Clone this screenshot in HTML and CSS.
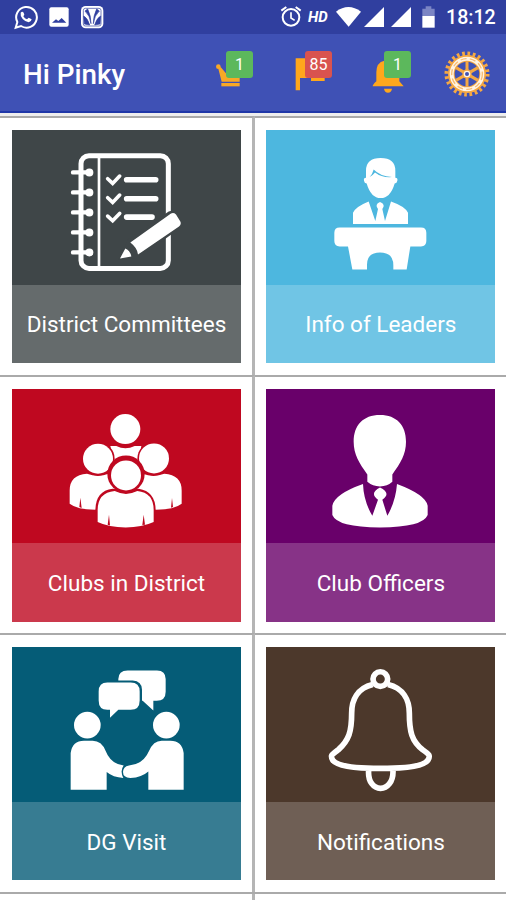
FILE: index.html
```html
<!DOCTYPE html>
<html lang="en">
<head>
<meta charset="utf-8">
<title>Hi Pinky</title>
<link rel="stylesheet" href="styles.css">
</head>
<body>
<header class="status">
  <div class="status-left">
    <svg width="24" height="25" viewBox="42 15 72 75"><path d="M47 83l5-17a31 31 0 1 1 11 12z" fill="none" stroke="#fff" stroke-width="6"/><path d="M62 38q5-6 9 0l2 6-3 5q4 7 11 9l5-5 9 5q-1 8-9 9-8 0-18-10-8-10-6-19z" fill="#fff"/></svg>
    <svg width="20" height="20" viewBox="149 23 60 60"><rect x="150" y="24" width="58" height="58" rx="6" fill="#fff"/><path d="M158 70l12-10 7 5 10-9 14 14z" fill="#303f9f"/></svg>
    <svg width="24" height="24" viewBox="243 15 72 72"><rect x="246" y="18" width="67" height="67" rx="14" fill="#fff"/><rect x="253" y="25" width="53" height="53" rx="6" fill="none" stroke="#303f9f" stroke-width="2"/><path d="M266 27q10 20 10 44-3-25-18-38zM293 27q-10 20-10 44 3-25 18-38zM254 48q12 6 18 27l-16-3zM305 48q-12 6-18 27l16-3z" fill="#303f9f" stroke="#303f9f" stroke-width="2"/></svg>
  </div>
  <div class="status-right">
    <svg class="alarm" width="22" height="22" viewBox="82 20 66 66"><circle cx="115" cy="54" r="25" fill="none" stroke="#fff" stroke-width="6"/><path d="M86 34l15-11M144 34l-15-11" stroke="#fff" stroke-width="6"/><path d="M115 39v17l11 7" fill="none" stroke="#fff" stroke-width="5"/></svg>
    <span class="hd">HD</span>
    <svg class="wifi" width="25" height="20" viewBox="249 22 75 60"><path d="M249 36q37-28 75 0l-37 45z" fill="#fff"/></svg>
    <svg class="signal" width="20" height="20" viewBox="333 22 60 60"><path d="M333 82l60-60v60z" fill="#fff"/></svg>
    <svg class="signal" width="20" height="20" viewBox="333 22 60 60"><path d="M333 82l60-60v60z" fill="#fff"/></svg>
    <svg class="battery" width="13" height="22" viewBox="507 20 39 66"><path d="M508 28h10v-7h17v7h10v22h-37z" fill="#7b85c4"/><path d="M508 50h37v35h-37z" fill="#fff"/></svg>
    <span class="clock">18:12</span>
  </div>
</header>
<div class="appbar">
  <h1>Hi Pinky</h1>
  <nav class="actions">
    <div class="action crown">
      <svg width="37" height="42" viewBox="51 33 111 126"><path d="M65 81L82 101l13-18 11 25 16-12v29H68L58 86z" fill="#f9a825"/><circle cx="58" cy="80" r="7" fill="#f9a825"/><path d="M67 129h55v10H67z" fill="#f9a825"/></svg>
      <span class="badge">1</span>
    </div>
    <div class="action flag">
      <svg width="37" height="42" viewBox="287 33 111 126"><path d="M289 55h60v12h27v56h-41v-9h-33v37h-13z" fill="#ffa71c"/></svg>
      <span class="badge alert">85</span>
    </div>
    <div class="action bell">
      <svg width="39" height="42" viewBox="68 33 117 126"><path d="M70 139q0-5 11-15V97q0-30 24-35V49h20v13q25 5 25 35v27l13 15zM104 146h24q-2 12-12 12t-12-12z" fill="#ffa71c"/></svg>
      <span class="badge">1</span>
    </div>
    <svg class="wheel" width="46" height="46" viewBox="-69 -69 138 138">
      <circle r="61" fill="none" stroke="#f5a843" stroke-width="13" pathLength="96" stroke-dasharray="2 2"/>
      <circle r="47" fill="none" stroke="#f5a843" stroke-width="20"/>
      <circle r="46" fill="none" stroke="#fff4e5" stroke-width="12"/>
      <circle r="46" fill="none" stroke="#f8bd72" stroke-width="4" stroke-dasharray="18 10"/>
      <path d="M0-38V38M-33-19L33 19M-33 19L33-19" stroke="#f5a843" stroke-width="9"/>
      <circle r="14" fill="#f5a843"/><circle r="8" fill="#3f51b5" stroke="#fff4e5" stroke-width="4"/>
    </svg>
  </nav>
</div>
<main class="grid">
  <section class="cell"><a class="tile slate">
    <svg viewBox="36 60 687 463" fill="none" stroke="#fff" stroke-linecap="round">
      <rect x="243" y="137" width="262" height="338" rx="24" stroke-width="15"/>
      <path d="M297 143v326" stroke-width="8"/>
      <path d="M219 187h50M219 247h50M219 307h50M219 367h50M219 427h50" stroke-width="13"/>
      <path d="M268 187h.1M268 247h.1M268 307h.1M268 367h.1M268 427h.1" stroke-width="24"/>
      <path d="M380 209h87M380 266h87M380 321h76" stroke-width="17"/>
      <path d="M323 206l15 14 21-22M323 263l15 14 21-22M323 318l15 14 21-22" stroke-width="11"/>
      <path d="M354 450l29-61 123-85q17-6 26 4l17 27q3 12-7 18L417 443z" fill="#3f4648" stroke="none"/>
      <path d="M391 397l122-87q8-4 15 3l13 21q4 9-4 15L414 433q-2-20-23-36zM376 415q15 7 18 24l-34 6z" fill="#fff" stroke="none"/>
    </svg>
    <span class="label">District Committees</span></a></section>
  <section class="cell"><a class="tile sky">
    <svg viewBox="40 60 687 463" fill="#fff">
      <path d="M340 203v-21q0-38 44-38t44 38v21q8 0 6 9-1 8-8 8-13 44-42 44t-42-44q-7 0-8-8-2-9 6-9z"/>
      <path d="M351 201q8-8 12-23 19 20 55 23-29 3-51-14-7 9-16 14z" fill="#4db7df"/>
      <path d="M301 342v-34q7-18 47-34l20 59 8-36q-11-14 6-21 18 7 7 21l8 36 18-59q43 15 51 34v34z"/>
      <path d="M261 352h244q16 0 16 16v25q0 16-16 16h-32l-11 69h-40v-12q0-39-40-39t-39 39v12h-44l-13-69h-25q-16 0-16-16v-25q0-16 16-16z"/>
    </svg>
    <span class="label">Info of Leaders</span></a></section>
  <section class="cell"><a class="tile red">
    <svg viewBox="36 57 687 463" fill="#fff">
      <circle cx="376" cy="177" r="45"/>
      <path d="M331 228h18q27 13 55 0h20l-10 60h-70z"/>
      <path d="M209 401v-40q0-46 52-50 33 13 65 0l28 45-45 62q-74 4-100-17zM545 401v-40q0-46-52-50-33 13-65 0l-28 45 45 62q74 4 100-17z"/>
      <circle cx="294" cy="266" r="50" fill="#bf0820"/><circle cx="462" cy="266" r="50" fill="#bf0820"/>
      <circle cx="294" cy="266" r="45"/><circle cx="462" cy="265" r="45"/>
      <circle cx="378" cy="312" r="56" fill="#bf0820"/>
      <path d="M286 463v-41q0-60 52-66h78q51 8 51 66v41z" fill="#bf0820"/>
      <path d="M293 456v-36q0-52 51-57 34 17 68 0 49 5 49 57v36q-35 16-84 16-51 0-84-16z"/>
      <circle cx="378" cy="316" r="45"/>
      <path d="M238 411l3-28 4 31zM513 413l3-29 3 27zM323 464l4-30 3 32zM427 465l4-31 4 30z" fill="#bf0820"/>
    </svg>
    <span class="label">Clubs in District</span></a></section>
  <section class="cell"><a class="tile purple">
    <svg viewBox="40 57 687 463" fill="#fff">
      <path d="M382 135c50 0 78 31 78 80 0 38-17 65-41 98v22q-15 14-37 14t-38-14v-22c-24-33-41-60-41-98 0-49 28-80 79-80z"/>
      <path d="M239 407q7-35 92-65 2 52 28 95l17-48q-27-20 6-37 35 17 7 37l15 48q25-43 29-95 86 32 92 65v28q-15 37-143 37T239 435z"/>
    </svg>
    <span class="label">Club Officers</span></a></section>
  <section class="cell"><a class="tile teal">
    <svg viewBox="36 52 687 463" fill="#fff">
      <path d="M383 122h88q26 0 26 26v38q0 27-27 27h-10v29l-32-29h-38q-35 0-35-35v-30q0-26 28-26z"/>
      <path d="M320 152h78q28 2 28 28v46h-130v-41q2-30 24-33z" fill="#055c77"/>
      <path d="M322 158h70q27 0 27 27v27q0 28-27 28h-37l-25 24v-24h-8q-26 0-26-28v-27q0-27 26-27z"/>
      <circle cx="262" cy="286" r="40"/><circle cx="499" cy="286" r="40"/>
      <path d="M212 480V370q5-37 40-37h26q27 0 39 31 15 39 54 43-12 16-1 38-31-2-50-18v53z"/>
      <path d="M551 480V370q-5-37-40-37h-26q-25 0-38 31-17 40-60 43-18 3-18 20t22 18q35-3 54-20v55z"/>
    </svg>
    <span class="label">DG Visit</span></a></section>
  <section class="cell"><a class="tile brown">
    <svg viewBox="40 52 687 463" fill="none" stroke="#fff" stroke-width="17">
      <circle cx="383" cy="148" r="22"/>
      <path d="M360 164c-46 11-63 47-63 86 0 55-8 82-40 110-23 17-24 17-17 31 13 18 66 25 143 25s132-7 143-25c8-14 4-17-16-31-33-25-40-55-40-110 0-39-18-75-64-86M348 421c-6 72 76 74 73 0"/>
    </svg>
    <span class="label">Notifications</span></a></section>
</main>
</body>
</html>
```
FILE: styles.css
```css
* { box-sizing: border-box; }
body {
  margin: 0;
  height: 900px;
  overflow: hidden;
  background: #fff;
  color: #fff;
  font-family: Roboto, "Liberation Sans", sans-serif;
}
svg { display: block; flex: none; }
.status {
  height: 34px;
  background: #303f9f;
  display: flex;
  justify-content: space-between;
  padding: 0 11px 0 14px;
}
.status-left, .status-right { display: flex; align-items: center; }
.status-left { gap: 11px; }
.hd { margin: 0 7px 0 6px; width: 21px; font-size: 15px; font-weight: 700; font-style: italic; white-space: nowrap; }
.wifi { margin-right: 3px; }
.signal { margin-right: 7px; }
.battery { margin: 0 11px 0 4px; }
.clock { width: 49px; font-size: 19.6px; font-weight: 500; white-space: nowrap; text-align: right; padding-top: 1px; }
.appbar {
  height: 79px;
  background: #3f51b5;
  border-bottom: 2px solid #1f37a8;
  display: flex;
  justify-content: space-between;
  padding: 0 16px 0 23px;
}
h1 { margin: 0; font-size: 27.8px; font-weight: 500; line-height: 82px; }
.actions { display: flex; align-items: flex-start; padding-top: 17px; }
.action { position: relative; }
.crown { margin-right: 42px; }
.flag { margin-right: 40px; }
.bell { margin-right: 33px; }
.badge {
  position: absolute;
  top: 0;
  right: 0;
  width: 27px;
  height: 27px;
  border-radius: 3px;
  background: #5cb85c;
  font-size: 16px;
  line-height: 27px;
  text-align: center;
}
.alert { background: #d9534f; }
.grid {
  display: grid;
  grid-template-columns: 255px 251px;
  grid-template-rows: repeat(3, 258.7px) 1fr;
  height: 787px;
  border-top: 3px solid #eee;
}
.cell {
  border-top: 2.4px solid #aaa;
  padding: 12px 0 0 11.4px;
}
.cell:nth-child(odd) { border-right: 3px solid #b5b5b5; padding-left: 12px; }
.grid::after {
  content: "";
  grid-column: 1 / 3;
  border-top: 2px solid #aaa;
  background: linear-gradient(90deg, transparent 252px, #b5b5b5 252px, #b5b5b5 255px, transparent 255px);
}
.tile { display: flex; flex-direction: column; width: 229px; height: 233px; }
.tile svg { width: 229px; height: 154.5px; }
.label {
  flex: 1;
  display: flex;
  align-items: center;
  justify-content: center;
  padding-top: 1px;
  background: rgba(255, 255, 255, 0.2);
  font-size: 22.5px;
  white-space: nowrap;
}
.slate { background: #3f4648; }
.sky { background: #4db7df; }
.red { background: #bf0820; }
.purple { background: #69006a; }
.teal { background: #055c77; }
.brown { background: #4c382b; }
```
